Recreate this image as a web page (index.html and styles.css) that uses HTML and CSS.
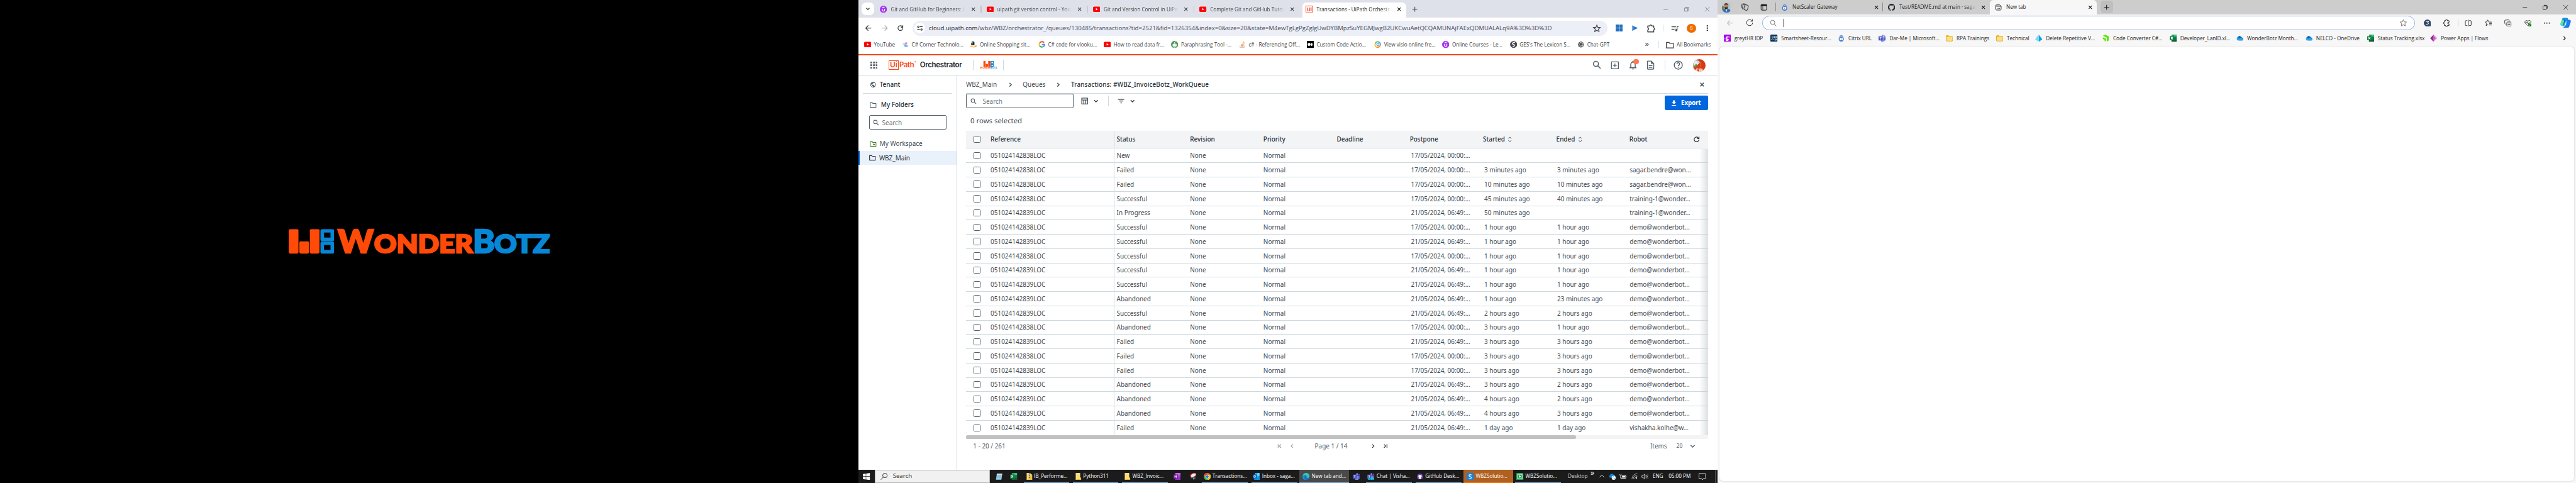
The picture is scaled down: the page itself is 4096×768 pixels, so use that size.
FILE: index.html
```html
<!DOCTYPE html>
<html lang="en">
<head>
<meta charset="utf-8">
<title>Transactions - UiPath Orchestrator</title>
<link rel="stylesheet" href="styles.css">
</head>
<body>
<svg class="sprite" aria-hidden="true">
  <symbol id="yt" viewBox="0 0 16 16"><rect y="2" width="16" height="12" rx="2.5" fill="#f00"/><path d="M6.5 5.4v5.2L10.8 8z" fill="#fff"/></symbol>
  <symbol id="udemy" viewBox="0 0 16 16"><circle cx="8" cy="8" r="8" fill="#a435f0"/><path d="M5.3 7v2.4a2.7 2.7 0 0 0 5.4 0V7M5.5 5 8 3.2 10.5 5" fill="none" stroke="#fff" stroke-width="1.7"/></symbol>
  <symbol id="x" viewBox="0 0 16 16"><path d="M4.5 4.5l7 7m0-7l-7 7" fill="none" stroke="currentColor" stroke-width="1.6"/></symbol>
  <symbol id="xthin" viewBox="0 0 16 16"><path d="M3 3l10 10m0-10L3 13" fill="none" stroke="currentColor" stroke-width="1.1"/></symbol>
  <symbol id="min" viewBox="0 0 16 16"><path d="M3 8.5h10" stroke="currentColor" stroke-width="1.1"/></symbol>
  <symbol id="restore" viewBox="0 0 16 16"><path d="M3.5 5.5h7v7h-7zM5.5 5.5v-2h7v7h-2" fill="none" stroke="currentColor" stroke-width="1.1"/></symbol>
  <symbol id="restore2" viewBox="0 0 16 16"><rect x="3.5" y="5" width="7.5" height="8" rx="1.5" fill="none" stroke="currentColor" stroke-width="1.1"/><path d="M5.5 3.3H11a2 2 0 0 1 2 2v5.5" fill="none" stroke="currentColor" stroke-width="1.1"/></symbol>
  <symbol id="plus" viewBox="0 0 16 16"><path d="M8 2.5v11M2.5 8h11" stroke="currentColor" stroke-width="1.5"/></symbol>
  <symbol id="down" viewBox="0 0 16 16"><path d="M4 6l4 4 4-4" fill="none" stroke="currentColor" stroke-width="1.8"/></symbol>
  <symbol id="right" viewBox="0 0 16 16"><path d="M6 4l4 4-4 4" fill="none" stroke="currentColor" stroke-width="1.7"/></symbol>
  <symbol id="left" viewBox="0 0 16 16"><path d="M10 4L6 8l4 4" fill="none" stroke="currentColor" stroke-width="1.7"/></symbol>
  <symbol id="first" viewBox="0 0 16 16"><path d="M12 4L8 8l4 4M5 3.5v9" fill="none" stroke="currentColor" stroke-width="1.7"/></symbol>
  <symbol id="last" viewBox="0 0 16 16"><path d="M4 4l4 4-4 4M11 3.5v9" fill="none" stroke="currentColor" stroke-width="1.7"/></symbol>
  <symbol id="back" viewBox="0 0 16 16"><path d="M14.5 8H2.5M8 2.2L2.2 8 8 13.8" fill="none" stroke="currentColor" stroke-width="1.8"/></symbol>
  <symbol id="fwd" viewBox="0 0 16 16"><path d="M1.5 8h12M8 2.2L13.8 8 8 13.8" fill="none" stroke="currentColor" stroke-width="1.8"/></symbol>
  <symbol id="reload" viewBox="0 0 16 16"><path d="M13.2 8a5.3 5.3 0 1 1-1.5-3.7l1.5 1.5M13.4 1.8v4.3H9.2" fill="none" stroke="currentColor" stroke-width="1.7"/></symbol>
  <symbol id="reload2" viewBox="0 0 16 16"><path d="M14.2 8a6.3 6.3 0 1 1-1.8-4.4l1 1M13.8 1v4h-4" fill="none" stroke="currentColor" stroke-width="1.2"/></symbol>
  <symbol id="tune" viewBox="0 0 16 16"><circle cx="4.5" cy="4.8" r="1.7" fill="none" stroke="currentColor" stroke-width="1.6"/><circle cx="11.5" cy="11.2" r="1.7" fill="none" stroke="currentColor" stroke-width="1.6"/><path d="M8 4.8h6M2 11.2h6" stroke="currentColor" stroke-width="1.8"/></symbol>
  <symbol id="star" viewBox="0 0 24 24"><path d="M12 3.2l2.6 6 6.5.6-4.9 4.3 1.5 6.4-5.7-3.4-5.7 3.4 1.5-6.4-4.9-4.3 6.5-.6z" fill="none" stroke="currentColor" stroke-width="2"/></symbol>
  <symbol id="starthin" viewBox="0 0 24 24"><path d="M12 2.5l2.9 6.3 6.7.8-5 4.6 1.4 6.8-6-3.4L6 21l1.4-6.8-5-4.6 6.7-.8z" fill="none" stroke="currentColor" stroke-width="1.5"/></symbol>
  <symbol id="puzzle" viewBox="0 0 24 24"><path d="M3.5 5.5H9a2.6 2.6 0 0 1 5.2 0h5.3v5.2a2.7 2.7 0 0 1 0 5.3v5.5h-16v-5.2a3 3 0 0 0 0-5.8z" fill="none" stroke="currentColor" stroke-width="2.4" stroke-linejoin="round"/></symbol>
  <symbol id="puzzle2" viewBox="0 0 24 24"><path d="M5 5.5h4a2.6 2.6 0 1 1 5 0h5v5h-2a2.2 2.2 0 1 0 0 4.4h2v5h-5a2.6 2.6 0 1 1-5 0H5v-5.2a2.4 2.4 0 1 1 0-4.6z" fill="none" stroke="currentColor" stroke-width="1.7" stroke-linejoin="round"/></symbol>
  <symbol id="music" viewBox="0 0 24 24"><path d="M15 6H3v2h12V6zm0 4H3v2h12v-2zM3 16h8v-2H3v2zM17 6v8.2c-.3-.1-.7-.2-1-.2a3 3 0 1 0 3 3V8h3V6h-5z" fill="currentColor"/></symbol>
  <symbol id="dotsv" viewBox="0 0 16 16"><circle cx="8" cy="3" r="1.5"/><circle cx="8" cy="8" r="1.5"/><circle cx="8" cy="13" r="1.5"/></symbol>
  <symbol id="dotsh" viewBox="0 0 16 16"><circle cx="2.5" cy="8" r="1.3"/><circle cx="8" cy="8" r="1.3"/><circle cx="13.5" cy="8" r="1.3"/></symbol>
  <symbol id="win" viewBox="0 0 16 16"><path d="M0 2.3L6.6 1.4V7.5H0zM7.4 1.3L16 0v7.5H7.4zM0 8.4h6.6v6.2L0 13.7zM7.4 8.4H16V16l-8.6-1.3z" fill="currentColor"/></symbol>
  <symbol id="bluegrid" viewBox="0 0 16 16"><path d="M0 0h7.5v7.5H0zM8.500 0H16v7.5H8.5zM0 8.5h7.5V16H0zM8.5 8.5H16V16H8.5z" fill="#1f6fbe"/></symbol>
  <symbol id="bluearrow" viewBox="0 0 16 16"><path d="M1.500 2L14.5 7.6 1.500 14z" fill="#2a6fc0"/><path d="M1.500 2l4 5.800-4 6.200z" fill="#75aee8"/></symbol>
  <symbol id="csharp" viewBox="0 0 16 16"><path d="M4 9c1-2 4-3 6-1 3 0 4 2 3 6H7c-1-2-2-3-3-5z" fill="#7db9ec"/><path d="M1 8l4-5 3 5z" fill="#b9d4ea"/><path d="M9 2l1.2 1.7L12 3.5l-.8 1.7.9 1.5-1.9-.3L9 8l-.5-1.8-1.9-.5 1.600-1z" fill="#e0455a"/></symbol>
  <symbol id="amazon" viewBox="0 0 16 16"><text x="2.5" y="10.5" font-family="Open Sans" font-weight="800" font-size="14" fill="#111">a</text><path d="M1 11c3.500 3.300 9 3.500 12.500 1.200M12 11l2.500.3-.7 2.300" fill="none" stroke="#f90" stroke-width="1.6"/></symbol>
  <symbol id="google" viewBox="0 0 16 16"><path d="M12.700 4A5.800 5.800 0 0 0 3 5" fill="none" stroke="#ea4335" stroke-width="2.6"/><path d="M3 5a5.800 5.800 0 0 0 0 6" fill="none" stroke="#fbbc05" stroke-width="2.6"/><path d="M3 11a5.800 5.800 0 0 0 9 1.200" fill="none" stroke="#34a853" stroke-width="2.6"/><path d="M8 8h5.800c0 2-.7 3.300-1.900 4.300" fill="none" stroke="#4285f4" stroke-width="2.6"/></symbol>
  <symbol id="quill" viewBox="0 0 16 16"><circle cx="8" cy="8" r="8" fill="#499557"/><rect x="3.500" y="6.500" width="9" height="6" rx="1.800" fill="#fff"/><path d="M8 6.500V3l2.500-1" stroke="#fff" stroke-width="1.300" fill="none"/><circle cx="6" cy="9" r=".9" fill="#499557"/><circle cx="10" cy="9" r=".9" fill="#499557"/><path d="M6 14.500h4" stroke="#fff"/></symbol>
  <symbol id="so" viewBox="0 0 16 16"><path d="M2.500 10v5h9v-5" fill="none" stroke="#bcbbbb" stroke-width="1.300"/><path d="M4.300 12.700h5.500M4.500 10l5.400 1M5.300 7.200l5 2.300M7 4.200l4.300 3.500M9.800 1.500l3 4.500" stroke="#f48024" stroke-width="1.300"/></symbol>
  <symbol id="medium" viewBox="0 0 16 16"><rect width="16" height="16" fill="#000"/><circle cx="4.800" cy="8" r="3.300" fill="#fff"/><ellipse cx="10.300" cy="8" rx="1.700" ry="3.100" fill="#fff"/><path d="M13.500 5.300v5.400" stroke="#fff"/></symbol>
  <symbol id="swirl" viewBox="0 0 16 16"><path d="M8 2a6 6 0 0 1 5.800 7" fill="none" stroke="#2ea3d8" stroke-width="2.600"/><path d="M13.800 9A6 6 0 0 1 5 13.500" fill="none" stroke="#f58220" stroke-width="2.600"/><path d="M5 13.500A6 6 0 0 1 2.500 6" fill="none" stroke="#fbc02d" stroke-width="2.600"/><path d="M2.500 6A6 6 0 0 1 8 2" fill="none" stroke="#6cb33f" stroke-width="2.600"/><circle cx="8.300" cy="8" r="2.600" fill="none" stroke="#3f8fd0" stroke-width="1.500"/></symbol>
  <symbol id="ges" viewBox="0 0 16 16"><circle cx="8" cy="8" r="7.800" fill="#474a50"/><path d="M11 3.500C7 3 4.500 5 6 7c1 1.300 4 .8 4 3 0 1.500-2 2.500-4 3" fill="none" stroke="#fff" stroke-width="2"/></symbol>
  <symbol id="gpt" viewBox="0 0 16 16"><g fill="none" stroke="#444" stroke-width="1.200"><circle cx="8" cy="8" r="2"/><ellipse cx="8" cy="4.800" rx="3.200" ry="2.900"/><ellipse cx="10.800" cy="6.600" rx="3.200" ry="2.900"/><ellipse cx="10.800" cy="9.800" rx="3.200" ry="2.900"/><ellipse cx="8" cy="11.300" rx="3.200" ry="2.900"/><ellipse cx="5.200" cy="9.800" rx="3.200" ry="2.900"/><ellipse cx="5.200" cy="6.600" rx="3.200" ry="2.900"/></g></symbol>
  <symbol id="folder" viewBox="0 0 16 16"><path d="M1 3h5l1.500 1.800H15V14H1z" fill="none" stroke="currentColor" stroke-width="1.700" stroke-linejoin="round"/></symbol>
  <symbol id="folderstar" viewBox="0 0 16 16"><path d="M1 3h5l1.500 1.800H15V14H1z" fill="none" stroke="currentColor" stroke-width="1.700" stroke-linejoin="round"/><path d="M10 6.500l.9 1.900 2 .2-1.500 1.400.4 2-1.800-1-1.800 1 .4-2L7.100 8.600l2-.2z" fill="currentColor"/></symbol>
  <symbol id="globe" viewBox="0 0 24 24"><path d="M12 2a10 10 0 1 0 0 20 10 10 0 0 0 0-20zm-1 17.930C7.050 19.440 4 16.080 4 12c0-.62.080-1.210.210-1.790L9 15v1c0 1.100.9 2 2 2v1.930zm6.900-2.540c-.26-.81-1-1.390-1.900-1.390h-1v-3c0-.55-.45-1-1-1H8v-2h2c.55 0 1-.45 1-1V7h2c1.100 0 2-.9 2-2v-.41c2.930 1.190 5 4.060 5 7.410 0 2.080-.8 3.970-2.100 5.390z" fill="currentColor"/></symbol>
  <symbol id="search" viewBox="0 0 16 16"><circle cx="6.300" cy="6.300" r="4.500" fill="none" stroke="currentColor" stroke-width="1.700"/><path d="M9.600 9.600l5 5" stroke="currentColor" stroke-width="1.900"/></symbol>
  <symbol id="searchthin" viewBox="0 0 16 16"><circle cx="6.500" cy="6.500" r="4.700" fill="none" stroke="currentColor" stroke-width="1.100"/><path d="M10 10l4.500 4.500" stroke="currentColor" stroke-width="1.200"/></symbol>
  <symbol id="searchwin" viewBox="0 0 16 16"><circle cx="10" cy="5.800" r="5" fill="none" stroke="currentColor" stroke-width="1.300"/><path d="M6.400 9.400L.8 15.200" stroke="currentColor" stroke-width="1.300"/></symbol>
  <symbol id="waffle" viewBox="0 0 16 16"><path d="M0 0h4v4H0zM6 0h4v4H6zM12 0h4v4h-4zM0 6h4v4H0zM6 6h4v4H6zM12 6h4v4h-4zM0 12h4v4H0zM6 12h4v4H6zM12 12h4v4h-4z" fill="currentColor"/></symbol>
  <symbol id="addbox" viewBox="0 0 24 24"><path d="M3.500 3.500h17v17h-17zM12 7.500v9M7.500 12h9" fill="none" stroke="currentColor" stroke-width="2" stroke-linejoin="round"/></symbol>
  <symbol id="bell" viewBox="0 0 24 24"><path d="M12 22c1.100 0 2-.9 2-2h-4a2 2 0 0 0 2 2zm6-6v-5c0-3.070-1.630-5.640-4.500-6.320V4a1.500 1.500 0 0 0-3 0v.68C7.640 5.360 6 7.920 6 11v5l-2 2v1h16v-1l-2-2zm-2 1H8v-6c0-2.480 1.510-4.500 4-4.500s4 2.020 4 4.500v6z" fill="currentColor"/></symbol>
  <symbol id="doc" viewBox="0 0 24 24"><path d="M8 16h8v2H8zm0-4h8v2H8zm6-10H6c-1.100 0-2 .9-2 2v16c0 1.100.890 2 1.990 2H18c1.100 0 2-.9 2-2V8l-6-6zm4 18H6V4h7v5h5v11z" fill="currentColor"/></symbol>
  <symbol id="help" viewBox="0 0 24 24"><circle cx="12" cy="12" r="9" fill="none" stroke="currentColor" stroke-width="2"/><path d="M9 9.500a3 3 0 1 1 4.500 2.600c-1 .6-1.500 1-1.500 2.200M12 16v2" fill="none" stroke="currentColor" stroke-width="2"/></symbol>
  <symbol id="tableicon" viewBox="0 0 16 16"><path d="M1.500 1.500h13v13h-13zM1.500 5.500h13M6 5.500v9M10.300 5.500v9" fill="none" stroke="currentColor" stroke-width="1.500"/></symbol>
  <symbol id="filter" viewBox="0 0 16 16"><path d="M1 4h14M3.800 8h8.400M6.600 12h2.800" stroke="currentColor" stroke-width="1.800"/></symbol>
  <symbol id="download" viewBox="0 0 16 16"><path d="M6 2h4v4h3L8 11 3 6h3zM3 12.500h10V14H3z" fill="currentColor"/></symbol>
  <symbol id="sort" viewBox="0 0 16 16"><path d="M4.700 6L8 2.700 11.300 6M4.700 10L8 13.300 11.300 10" fill="none" stroke="currentColor" stroke-width="1.300"/></symbol>
  <symbol id="wbz" viewBox="0 0 102 56"><g fill="#ff4a08"><rect width="21.800" height="55" rx="3"/><rect x="23.800" y="27.600" width="21.700" height="27.400" rx="3"/><rect x="47.300" width="21.700" height="55" rx="3"/></g><g fill="none" stroke="#0787d6" stroke-width="8" stroke-linejoin="round"><rect x="75" y="4" width="22.500" height="19.200"/><rect x="75" y="31.800" width="22.500" height="19.200"/></g></symbol>
  <symbol id="lock" viewBox="0 0 16 16"><circle cx="8" cy="10" r="5.800" fill="#4a78c2"/><path d="M4.800 8V5a3.200 3.200 0 0 1 6.400 0v3" fill="none" stroke="#6d9adb" stroke-width="1.800"/><rect x="4.500" y="7.500" width="7" height="5" rx=".6" fill="#fff"/><path d="M8 9v2" stroke="#4a78c2" stroke-width="1.500"/></symbol>
  <symbol id="github" viewBox="0 0 16 16"><path fill="currentColor" d="M8 0C3.580 0 0 3.580 0 8c0 3.540 2.290 6.530 5.470 7.590.4.070.55-.17.55-.38 0-.19-.010-.82-.010-1.490-2.010.37-2.530-.49-2.690-.94-.09-.23-.48-.94-.82-1.130-.28-.15-.68-.52-.010-.53.63-.010 1.080.58 1.230.82.72 1.210 1.870.87 2.330.66.070-.52.280-.87.510-1.070-1.780-.2-3.640-.89-3.640-3.950 0-.87.310-1.590.820-2.150-.080-.2-.36-1.020.080-2.120 0 0 .670-.210 2.200.820.640-.180 1.320-.270 2-.270s1.360.090 2 .270c1.530-1.040 2.200-.820 2.200-.820.440 1.100.160 1.920.080 2.120.510.560.820 1.270.820 2.150 0 3.070-1.870 3.750-3.650 3.950.290.250.540.730.540 1.480 0 1.070-.010 1.930-.010 2.200 0 .210.150.460.550.380A8.010 8.010 0 0 0 16 8c0-4.420-3.580-8-8-8z"/></symbol>
  <symbol id="newtab" viewBox="0 0 16 16"><path d="M2 4.500a2 2 0 0 1 2-2h6.500L14 5.500V12a2 2 0 0 1-2 2H4a2 2 0 0 1-2-2zM2.500 5.500h11" fill="none" stroke="currentColor" stroke-width="1.300"/><path d="M4.800 10.200h1.400m1.200 0h1.400m1.100 0h1.400" stroke="currentColor" stroke-width="1.600"/></symbol>
  <symbol id="workspaces" viewBox="0 0 18 18"><g fill="none" stroke="currentColor" stroke-width="1.200"><rect x="7.500" y="4" width="8.500" height="11.500" rx="2" transform="rotate(12 11 10)"/><path d="M4 13.500a2 2 0 0 1-.5-2l1-6.500a2.500 2.500 0 0 1 2.500-2h5M1.800 11a2 2 0 0 1-.5-2l.8-5A2.500 2.500 0 0 1 4.500 1.500H9"/></g></symbol>
  <symbol id="vtabs" viewBox="0 0 16 16"><rect x="1.700" y="1.700" width="12.600" height="12.600" rx="2" fill="none" stroke="currentColor" stroke-width="1.400"/><path d="M1.700 2h12.600v2.700H1.700zM5.500 4v10" fill="currentColor" stroke="currentColor"/></symbol>
  <symbol id="greyt" viewBox="0 0 16 16"><rect width="16" height="16" fill="#a800e8"/><text x="4.200" y="11" font-family="Open Sans" font-weight="800" font-size="11" fill="#fff">g</text><circle cx="2.500" cy="9.500" r="1" fill="#fff"/><circle cx="13" cy="5.500" r="1" fill="#fff"/></symbol>
  <symbol id="smart" viewBox="0 0 16 16"><rect width="16" height="16" rx="2" fill="#06315b"/><g fill="none" stroke="#fff" stroke-width="1.100"><circle cx="5" cy="5.500" r="1.600"/><path d="M2 12c.3-3 5.500-3 6 0M9 4h4.500v3H9zM9.500 10h4v2.500h-4"/></g></symbol>
  <symbol id="teams" viewBox="0 0 16 16"><circle cx="9.500" cy="2.800" r="2.300" fill="#7b83eb"/><circle cx="14" cy="3.500" r="1.500" fill="#5059c9"/><path d="M12 6h4v5a2.500 2.500 0 0 1-4 2z" fill="#5059c9"/><path d="M5 6h8v6a4 4 0 0 1-8 1z" fill="#7b83eb"/><rect y="4" width="9" height="9" rx=".8" fill="#4b53bc"/><path d="M2.500 6.500h4M4.500 6.500V11" stroke="#fff" stroke-width="1.200"/></symbol>
  <symbol id="teamsnew" viewBox="0 0 16 16"><use href="#teams"/><rect x="2" y="11" width="13.500" height="5" rx="2" fill="#18e3ef"/><path d="M4 15v-3l2 3v-3M7.700 12v3h1.700M7.700 13.500h1.500M10.500 12l1 3 1-2 1 2 .8-3" fill="none" stroke="#123" stroke-width=".7"/></symbol>
  <symbol id="yfolder" viewBox="0 0 16 16"><path d="M.7 4a2 2 0 0 1 2-2h3l1.800 2h6a2 2 0 0 1 1.900 2v6.500a2 2 0 0 1-2 2H2.700a2 2 0 0 1-2-2z" fill="#ffe07a" stroke="#c79a1b" stroke-width="1.100"/><path d="M1.200 5.800h4.500L7.500 4 5.500 2.400h-3Q1.200 2.500 1.200 4z" fill="#f3bd2e"/></symbol>
  <symbol id="diamond" viewBox="0 0 16 16"><path d="M8 0l8 10.500L8 16z" fill="#00a4e4"/><path d="M8 0L0 10.500 8 16z" fill="#7ad5f7"/></symbol>
  <symbol id="green" viewBox="0 0 16 16"><path d="M1 2.500l5-2 8 3.500v9.500l-4 2V7z M1 6l7 3v5l-3 1.500V12L1 10z" fill="#5ce500"/></symbol>
  <symbol id="excel" viewBox="0 0 16 16"><path d="M4 0h12v16H4z" fill="#21a366"/><path d="M10 0h6v5h-6z" fill="#33c481"/><path d="M10 5h6v5.500h-6z" fill="#107c41"/><path d="M4 10.500h12V16H4z" fill="#185c37"/><rect y="3.500" width="9.500" height="9" rx=".6" fill="#107c41"/><path d="M2.800 5.500l4 5m0-5l-4 5" stroke="#fff" stroke-width="1.500"/></symbol>
  <symbol id="cloud" viewBox="0 0 16 16"><path d="M4.500 13A4 4 0 0 1 3 5.600 5 5 0 0 1 11.600 6a3.600 3.600 0 0 1 .9 7z" fill="#0f6cbd"/><path d="M3 13a3 3 0 0 1-.5-5.500L9 6.500l6 3.500a2 2 0 0 1-1.500 3.200z" fill="#28a8ea"/><path d="M2.700 6A5 5 0 0 1 11.500 6L7 9z" fill="#0364b8"/></symbol>
  <symbol id="papps" viewBox="0 0 16 16"><path d="M8 0l8 8-8 8z" fill="#e8a0dc"/><path d="M8 0v16L0 8z" fill="#92278f"/><path d="M8 3l5 5-5 5-2-5z" fill="#c860bd"/></symbol>
  <symbol id="three" viewBox="0 0 16 16"><path d="M8 0a8 8 0 1 0 3.500 15.200H16V8A8 8 0 0 0 8 0z" fill="#34496a"/><path d="M5 4.500h5.500L8.500 7.500c3 0 2.500 4-3.500 3.600" fill="none" stroke="#fff" stroke-width="1.500"/></symbol>
  <symbol id="split" viewBox="0 0 16 16"><path d="M6 2.500H3A1.500 1.500 0 0 0 1.500 4v8A1.500 1.500 0 0 0 3 13.500h3M10 2.500h3A1.500 1.500 0 0 1 14.500 4v8a1.500 1.500 0 0 1-1.500 1.500h-3M8 .5v15" fill="none" stroke="currentColor" stroke-width="1.200"/></symbol>
  <symbol id="favs" viewBox="0 0 16 16"><path d="M9 5.500L6.500 1 4.700 5.200.7 5.800l3 3-.8 5 4-2.200M9 5.800h6.500M10 9h5.500M9 12.200h6.500" fill="none" stroke="currentColor" stroke-width="1.200"/></symbol>
  <symbol id="coll" viewBox="0 0 16 16"><rect x="5.500" y="5.500" width="9.800" height="9.800" rx="2" fill="none" stroke="currentColor" stroke-width="1.200"/><path d="M10.400 7.800v5.400M7.700 10.500h5.400M3.500 11.500L1.300 9 .8 3.500A2 2 0 0 1 2.500 1.300L9 .8a2 2 0 0 1 2 1.700l.2 1" fill="none" stroke="currentColor" stroke-width="1.200"/></symbol>
  <symbol id="heart" viewBox="0 0 16 16"><path d="M7.500 14L2 8.500C-1 5 3 0 7.700 3.500 12 0 16.500 4.500 14 8M1 7.500h3.500L6 5l2.500 5L10 7.500h4" fill="none" stroke="currentColor" stroke-width="1.100"/><circle cx="12" cy="12.300" r="3.600" fill="#107c10"/><path d="M10.300 12.500l1.200 1 2-2.400" fill="none" stroke="#fff"/></symbol>
  <symbol id="copilot" viewBox="0 0 24 24"><path d="M6 1h9l-5 17H4C0 18 0 15 1 12L4 3c.5-1.500 1-2 2-2z" fill="#1bb6c9"/><path d="M1 12L3 6l6 0-3 9c-1 3-5 3-5-3z" fill="#5fe3a1"/><path d="M14 5h6c4 0 4 3 3 6l-3 9c-.7 2-2 3-4 3H8l2-5c2 0 2.500-1 3-3z" fill="#1e7bf0"/><path d="M6 1h9c2 0 2 2 3 5h-5c-2 0-2.500 1-3 3L7 18l-1 2 2 3c-3 0-3-2-2-5L9 7z" fill="#0f4fc0"/><path d="M6 1h8c2 0 3 2 3.500 5H13L9 5z" fill="#1593d8"/></symbol>
  <symbol id="notepad" viewBox="0 0 16 16"><path d="M3 1.500h12L13 15H1z" fill="#9ed3ea"/><path d="M3 1.500h12l-.5 2.500H2.600z" fill="#d9e9ef"/><path d="M4 6h9M3.700 8.500h9M3.300 11h9" stroke="#5c98b8" stroke-width=".8"/></symbol>
  <symbol id="zip" viewBox="0 0 16 16"><path d="M2 0h8l1.500 3H14v13H2z" fill="#f7d774"/><path d="M12 4h2.500v12H4z" fill="#e9bd45"/><path d="M8 0v12" stroke="#555" stroke-width="2.500" stroke-dasharray="1.200 .8"/></symbol>
  <symbol id="tfolder" viewBox="0 0 16 16"><path d="M2 0h10v10.500h2V16H2z" fill="#fbdc7b"/><path d="M12 10.500h2.200V16H2l2-2h8z" fill="#e5b43c"/></symbol>
  <symbol id="onenote" viewBox="0 0 16 16"><path d="M4 0h12v16H4z" fill="#ae4bd5"/><path d="M4 0h12v4H4z" fill="#ca64ea"/><path d="M12 8h4v8H4v-4z" fill="#9332bf"/><rect y="3.500" width="9.500" height="9" fill="#7719aa"/><path d="M3 10.500V5.600l3.500 4.800V5.500" fill="none" stroke="#fff" stroke-width="1.300"/></symbol>
  <symbol id="snip" viewBox="0 0 16 16"><ellipse cx="9" cy="5" rx="6.500" ry="4" transform="rotate(-25 9 5)" fill="#eee" stroke="#c33" stroke-width="1.500"/><path d="M2 9l8 1-5 2z" fill="#d84a4a"/><path d="M10 8v7M8 12l6-1" stroke="#4aa0d8" stroke-width="1.700"/></symbol>
  <symbol id="chrome" viewBox="0 0 16 16"><circle cx="8" cy="8" r="8" fill="#fbc116"/><path d="M1.070 4A8 8 0 0 1 14.930 4H8a4 4 0 0 0-3.460 6z" fill="#ea4335"/><path d="M1.070 4A8 8 0 0 0 8 16l3.460-6A4 4 0 0 1 4.540 10z" fill="#34a853"/><circle cx="8" cy="8" r="4" fill="#fff"/><circle cx="8" cy="8" r="3.100" fill="#1a73e8"/></symbol>
  <symbol id="outlook" viewBox="0 0 16 16"><path d="M5 0h10v14H5z" fill="#28a8ea"/><path d="M10 0h5v7h-5z" fill="#50d9ff"/><path d="M3 8l7 3 6-3v8H3z" fill="#1490df"/><rect y="3.500" width="9" height="9" fill="#0a5fb8"/><ellipse cx="4.500" cy="8" rx="1.900" ry="2.300" fill="none" stroke="#fff" stroke-width="1.300"/></symbol>
  <symbol id="edge" viewBox="0 0 16 16"><circle cx="8" cy="8" r="8" fill="#1b6fc4"/><path d="M.3 7C1 2.500 4.500 0 8 0c5 0 8 3.500 8 7 0 3-2.500 4-5 4-1.500 0-2.500-.7-1.800-1.600C10.500 7.500 8.500 5 6 5 3.500 5 1 6 .3 7z" fill="#3bc9a5"/><path d="M6 5C3 5 0 7 .2 9.500 1 13.500 4 16 8 16c-3.500-1-5-5-3.500-8C5 7 6 6 6 5z" fill="#1597dd"/></symbol>
  <symbol id="ghdesk" viewBox="0 0 16 16"><circle cx="8" cy="8" r="8" fill="#6e40aa"/><path d="M4.500 5l-.3-2 2 1h3.600l2-1-.3 2c1.500 3 .5 5.500-2 5.800.4.500.5 1 .5 2V14H6v-1.500c-1.500.4-2-.5-2.500-1l1.300.1c.5.600 1.200.5 1.300-.8C3.800 10.500 3 8 4.500 5z" fill="#fff"/></symbol>
  <symbol id="studio" viewBox="0 0 16 16"><rect width="16" height="16" fill="#1182e8"/><path d="M11 4.500C7 2.500 4 5 6 7s6 2 4 5c-1 1.500-4 1-5 .2" fill="none" stroke="#fff" stroke-width="1.600"/></symbol>
  <symbol id="play" viewBox="0 0 16 16"><rect width="16" height="16" rx="1" fill="#1d9c4c"/><path d="M3 3h10v10H3z" fill="none" stroke="#fff" stroke-width="1.300"/><path d="M6 5l5 3-5 3z" fill="#fff"/></symbol>
  <symbol id="up" viewBox="0 0 16 16"><path d="M2 11l6-6 6 6" fill="none" stroke="currentColor" stroke-width="1.300"/></symbol>
  <symbol id="sync" viewBox="0 0 16 16"><path d="M3.500 11A3.500 3.500 0 0 1 3 4.500 4.500 4.500 0 0 1 11 4a3 3 0 0 1 3 4z" fill="#1683d8"/><circle cx="11" cy="11" r="4.600" fill="#fff"/><path d="M8.300 10.500A2.700 2.700 0 0 1 13 9.300M13.700 11.500A2.700 2.700 0 0 1 9 12.700" fill="none" stroke="#1683d8" stroke-width="1.200"/></symbol>
  <symbol id="battery" viewBox="0 0 16 16"><path d="M5 5h9v7H4V9.500" fill="none" stroke="#fff" stroke-width="1.200"/><path d="M6 6.700h6.500v3.700H6zM14.500 7h1.300v3h-1.300z" fill="#fff"/><path d="M1 2.500v3h3v-3M2.500 6v6" fill="none" stroke="#fff"/></symbol>
  <symbol id="wifi" viewBox="0 0 16 16"><g fill="none" stroke="#ddd" stroke-width="1.200"><path d="M1.500 15A13 13 0 0 1 15 2M5 15A10 10 0 0 1 15 5.500M8.500 15A7 7 0 0 1 15 9"/></g><circle cx="13" cy="13" r="1.800" fill="#fff"/></symbol>
  <symbol id="sound" viewBox="0 0 16 16"><path d="M1 6h2.500L7 2.500v11L3.500 10H1zM9.500 6a3 3 0 0 1 0 4M11.500 4a6 6 0 0 1 0 8" fill="none" stroke="#fff" stroke-width="1.100"/><path d="M13.500 2.300a9 9 0 0 1 0 11.400" fill="none" stroke="#777" stroke-width="1.100"/></symbol>
  <symbol id="notif" viewBox="0 0 16 16"><path d="M.7 1.500h14.600v11h-4.500L8.500 15.300 6.200 12.500H.7z" fill="none" stroke="#fff" stroke-width="1.200"/></symbol>
</svg>

<div class="desktop">
  <section class="wall">
    <svg class="wall-logo" viewBox="0 0 590 62" role="img">
      <use href="#wbz" x="0" y="3" width="102" height="56"/>
      <g class="wordmark">
        <text class="hot" x="110" y="56" font-size="73" textLength="80" lengthAdjust="spacingAndGlyphs">W</text>
        <text class="hot" x="191" y="56" font-size="57" textLength="221" lengthAdjust="spacingAndGlyphs">ONDER</text>
        <text class="cool" x="412" y="56" font-size="73" textLength="49" lengthAdjust="spacingAndGlyphs">B</text>
        <text class="cool" x="460" y="56" font-size="57" textLength="124" lengthAdjust="spacingAndGlyphs">OTZ</text>
      </g>
    </svg>
  </section>

  <section class="screen">
    <div class="ctabs">
      <span class="tabsearch"><svg class="i14"><use href="#down"/></svg></span>
      <div class="ctab"><svg><use href="#udemy"/></svg><span class="fade">Git and GitHub for Beginners: Le</span><svg><use href="#x"/></svg></div>
      <div class="ctab"><svg><use href="#yt"/></svg><span class="fade">uipath git version control - YouT</span><svg><use href="#x"/></svg></div>
      <div class="ctab"><svg><use href="#yt"/></svg><span class="fade">Git and Version Control in UiPat</span><svg><use href="#x"/></svg></div>
      <div class="ctab last"><svg><use href="#yt"/></svg><span class="fade">Complete Git and GitHub Tutori</span><svg><use href="#x"/></svg></div>
      <div class="ctab active"><svg viewBox="0 0 16 16"><rect x=".7" y=".7" width="14.600" height="14.600" fill="#fff" stroke="#fa4616" stroke-width="1.400"/><text x="2.500" y="12.300" font-family="Inter" font-weight="700" font-size="11.500" fill="#fa4616">Ui</text></svg><span class="fade">Transactions - UiPath Orchestrat</span><svg><use href="#x"/></svg></div>
      <span class="newtab"><svg><use href="#plus"/></svg></span>
      <div class="winbtns gray"><svg><use href="#min"/></svg><svg><use href="#restore"/></svg><svg><use href="#xthin"/></svg></div>
    </div>
    <div class="ctoolbar">
      <svg><use href="#back"/></svg>
      <svg class="dim"><use href="#fwd"/></svg>
      <svg><use href="#reload"/></svg>
      <div class="omnibox"><span class="site"><svg><use href="#tune"/></svg></span><span class="url"><b>cloud.uipath.com</b>/wbz/WBZ/orchestrator_/queues/130485/transactions?tid=2521&amp;fid=1326354&amp;index=0&amp;size=20&amp;state=M4ewTgLgPgZglgUwDYBMpzSuYEGMJwgB2UKCwuAetQCQAMUNAjFAExQDMUALALq9A%3D%3D%3D</span><svg class="i20"><use href="#star"/></svg></div>
      <svg><use href="#bluegrid"/></svg>
      <svg><use href="#bluearrow"/></svg>
      <svg class="i20"><use href="#puzzle"/></svg>
      <i class="vbar blue"></i>
      <svg class="i20"><use href="#music"/></svg>
      <span class="profile">S</span>
      <svg><use href="#dotsv"/></svg>
    </div>
    <div class="cmarks">
      <span class="mark"><svg><use href="#yt"/></svg>YouTube</span>
      <span class="mark"><svg><use href="#csharp"/></svg>C# Corner Technolo...</span>
      <span class="mark"><svg><use href="#amazon"/></svg>Online Shopping sit...</span>
      <span class="mark"><svg><use href="#google"/></svg>C# code for vlooku...</span>
      <span class="mark"><svg><use href="#yt"/></svg>How to read data fr...</span>
      <span class="mark"><svg><use href="#quill"/></svg>Paraphrasing Tool -...</span>
      <span class="mark"><svg><use href="#so"/></svg>c# - Referencing Off...</span>
      <span class="mark"><svg><use href="#medium"/></svg>Custom Code Actio...</span>
      <span class="mark"><svg><use href="#swirl"/></svg>View visio online fre...</span>
      <span class="mark"><svg><use href="#udemy"/></svg>Online Courses - Le...</span>
      <span class="mark"><svg><use href="#ges"/></svg>GES's The Lexicon S...</span>
      <span class="mark"><svg><use href="#gpt"/></svg>Chat-GPT</span>
      <span class="more">»</span>
      <i class="vbar blue"></i>
      <span class="mark"><svg class="i18"><use href="#folder"/></svg>All Bookmarks</span>
    </div>

    <header class="appbar">
      <svg class="waffle"><use href="#waffle"/></svg>
      <span class="uibox">Ui</span><span class="path">Path<sup>®</sup></span>
      <span class="product">Orchestrator</span>
      <i class="vbar"></i>
      <span class="tenantlogo"><svg viewBox="0 0 102 56"><use href="#wbz"/></svg><span><em>W<small>ONDER</small></em>B<small>OTZ</small></span></span>
      <i class="vbar"></i>
      <div class="appicons">
        <svg><use href="#search"/></svg>
        <svg class="i22"><use href="#addbox"/></svg>
        <span class="bell"><svg class="i24"><use href="#bell"/></svg><i class="dot"></i></span>
        <svg class="i24"><use href="#doc"/></svg>
        <i class="vbar"></i>
        <svg class="i24"><use href="#help"/></svg>
        <span class="avatar"><svg viewBox="0 0 28 28"><path d="M1 3h10l5 5v9H1z" fill="#e4eefb" stroke="#9fb4c8"/><path d="M11 3l5 5h-5z" fill="#fff" stroke="#9fb4c8"/><path d="M1 17l6-7 3 4 4-3 2 2v4z" fill="#5aa93e"/><path d="M6 17L16 7v10z" fill="#d93a12"/></svg>SB</span>
      </div>
    </header>

    <div class="workspace">
      <nav class="side">
        <div class="item strong tenant"><svg><use href="#globe"/></svg>Tenant</div>
        <div class="item strong folders"><svg><use href="#folder"/></svg>My Folders</div>
        <div class="field side-search"><svg><use href="#search"/></svg>Search</div>
        <div class="item own"><svg class="leaf"><use href="#folderstar"/></svg>My Workspace</div>
        <div class="item current"><svg><use href="#folder"/></svg>WBZ_Main</div>
      </nav>
      <main class="content">
        <div class="crumbs"><span>WBZ_Main</span><svg><use href="#right"/></svg><span class="q">Queues</span><svg><use href="#right"/></svg><strong>Transactions: #WBZ_InvoiceBotz_WorkQueue</strong><svg class="close i18"><use href="#x"/></svg></div>
        <div class="tools">
          <div class="field main-search"><svg><use href="#search"/></svg>Search</div>
          <svg class="t"><use href="#tableicon"/></svg><svg class="c"><use href="#down"/></svg>
          <i class="vbar"></i>
          <svg class="f"><use href="#filter"/></svg><svg class="c"><use href="#down"/></svg>
          <button class="export"><svg><use href="#download"/></svg>Export</button>
        </div>
        <div class="selected">0 rows selected</div>
        <div class="grid">
          <div class="row head">
            <i class="check"></i><span class="ref">Reference</span><span>Status</span><span>Revision</span><span>Priority</span><span>Deadline</span><span>Postpone</span><span>Started<svg><use href="#sort"/></svg></span><span>Ended<svg><use href="#sort"/></svg></span><span>Robot</span><svg class="refresh"><use href="#reload"/></svg>
          </div>
          <div class="rows" id="rows"></div>
          <i class="edgeshade"></i>
        </div>
        <div class="hscroll"><i></i></div>
        <div class="pager">
          <span class="range">1 - 20 / 261</span>
          <span class="nav"><svg class="off"><use href="#first"/></svg><svg class="off"><use href="#left"/></svg><span>Page 1 / 14</span><svg><use href="#right"/></svg><svg><use href="#last"/></svg></span>
          <span class="items">Items<b>20</b><svg><use href="#down"/></svg></span>
        </div>
      </main>
    </div>

    <footer class="taskbar">
      <span class="ic start"><svg><use href="#win"/></svg></span>
      <span class="wsearch"><svg><use href="#searchwin"/></svg>Search</span>
      <span class="ic"><svg><use href="#notepad"/></svg></span>
      <span class="ic"><svg><use href="#excel"/></svg></span>
      <span class="task slim"><svg><use href="#zip"/></svg>IB_Performe...</span>
      <span class="task slim"><svg><use href="#tfolder"/></svg>Python311</span>
      <span class="task slim"><svg><use href="#tfolder"/></svg>WBZ_Invoic...</span>
      <span class="ic"><svg><use href="#onenote"/></svg></span>
      <span class="ic pr"><svg><use href="#snip"/></svg></span>
      <span class="task"><svg><use href="#chrome"/></svg>Transactions...</span>
      <span class="task"><svg><use href="#outlook"/></svg>Inbox - saga...</span>
      <span class="task wide focus"><svg><use href="#edge"/></svg>New tab and...</span>
      <span class="ic pr"><svg><use href="#teams"/></svg></span>
      <span class="task"><svg><use href="#teamsnew"/></svg>Chat | Visha...</span>
      <span class="task"><svg class="i14"><use href="#ghdesk"/></svg>GitHub Desk...</span>
      <span class="task wide alert"><svg><use href="#studio"/></svg>WBZSolutio...</span>
      <span class="task"><svg><use href="#play"/></svg>WBZSolutio...</span>
      <span class="desk">Desktop</span>
      <span class="ic more2">»</span>
      <span class="ic"><svg class="i14"><use href="#up"/></svg></span>
      <span class="ic"><svg><use href="#sync"/></svg></span>
      <span class="ic"><svg><use href="#battery"/></svg></span>
      <span class="ic"><svg class="i14"><use href="#wifi"/></svg></span>
      <span class="ic"><svg><use href="#sound"/></svg></span>
      <span class="ic">ENG</span>
      <span class="ic">05:00 PM</span>
      <span class="ic"><svg><use href="#notif"/></svg></span>
      <i class="peek"></i>
    </footer>
  </section>

  <section class="edge">
    <div class="etabs">
      <span class="face"><svg viewBox="0 0 20 24"><rect width="20" height="24" fill="#b9c9c9"/><path d="M0 24c1-8 5-9 10-9s9 1 10 9z" fill="#2a6fc0"/><path d="M0 10h4v9H0z" fill="#5f7f56"/><ellipse cx="9.500" cy="9.500" rx="5" ry="6.500" fill="#b5806a"/><path d="M4 9c0-8 11-8 11 0l-1-3H5z" fill="#231b18"/><path d="M5.500 12h8c0 6-8 6-8 0z" fill="#33241f"/><path d="M8 17h4l-2 6z" fill="#e8edf2"/></svg></span>
      <svg class="i18"><use href="#workspaces"/></svg>
      <svg><use href="#vtabs"/></svg>
      <i class="vbar dark"></i>
      <div class="etab t1"><svg><use href="#lock"/></svg><span>NetScaler Gateway</span><svg><use href="#x"/></svg></div>
      <i class="vbar dark"></i>
      <div class="etab t2"><svg class="ink"><use href="#github"/></svg><span class="fade">Test/README.md at main · sagarb</span><svg><use href="#x"/></svg></div>
      <div class="etab on"><svg><use href="#newtab"/></svg><span>New tab</span><svg><use href="#x"/></svg></div>
      <span class="enew"><svg><use href="#plus"/></svg></span>
      <div class="winbtns"><svg><use href="#min"/></svg><svg><use href="#restore2"/></svg><svg><use href="#xthin"/></svg></div>
    </div>
    <div class="etoolbar">
      <svg class="dim"><use href="#back"/></svg>
      <svg class="i17"><use href="#reload2"/></svg>
      <div class="ebox"><svg><use href="#searchthin"/></svg><i class="caret"></i><svg class="i18 st"><use href="#starthin"/></svg></div>
      <svg><use href="#three"/></svg>
      <svg class="i18"><use href="#puzzle2"/></svg>
      <i class="vbar soft"></i>
      <svg><use href="#split"/></svg>
      <svg><use href="#favs"/></svg>
      <svg><use href="#coll"/></svg>
      <svg><use href="#heart"/></svg>
      <svg><use href="#dotsh"/></svg>
      <svg class="i24"><use href="#copilot"/></svg>
    </div>
    <div class="emarks">
      <span class="mark"><svg><use href="#greyt"/></svg>greytHR IDP</span>
      <span class="mark"><svg><use href="#smart"/></svg>Smartsheet-Resour...</span>
      <span class="mark"><svg><use href="#lock"/></svg>Citrix URL</span>
      <span class="mark"><svg><use href="#teams"/></svg>Dar-Me | Microsoft...</span>
      <span class="mark"><svg><use href="#yfolder"/></svg>RPA Trainings</span>
      <span class="mark"><svg><use href="#yfolder"/></svg>Technical</span>
      <span class="mark"><svg><use href="#diamond"/></svg>Delete Repetitive V...</span>
      <span class="mark"><svg><use href="#green"/></svg>Code Converter C#...</span>
      <span class="mark"><svg><use href="#excel"/></svg>Developer_LanID.xl...</span>
      <span class="mark"><svg><use href="#cloud"/></svg>WonderBotz Month...</span>
      <span class="mark"><svg><use href="#cloud"/></svg>NELCO - OneDrive</span>
      <span class="mark"><svg><use href="#excel"/></svg>Status Tracking.xlsx</span>
      <span class="mark"><svg><use href="#papps"/></svg>Power Apps | Flows</span>
      <svg class="over"><use href="#right"/></svg>
    </div>
    <div class="blank"></div>
  </section>
</div>
<script src="rows.js"></script>
</body>
</html>
```
FILE: styles.css
```css
* { box-sizing: border-box; }
body { margin: 0; overflow: hidden; background: #000; }
svg { display: block; width: 16px; height: 16px; flex: none; }
.sprite { display: none; }
.i14 { width: 14px; height: 14px; }
.i17 { width: 17px; height: 17px; }
.i18 { width: 18px; height: 18px; }
.i20 { width: 20px; height: 20px; }
.i22 { width: 22px; height: 22px; }
.i24 { width: 24px; height: 24px; }

.desktop {
  zoom: 0.711111;
  width: 5760px; height: 1080px;
  display: grid; grid-template-columns: 1920px 1920px 1920px;
  font-family: "Open Sans", sans-serif; font-size: 11.5px; line-height: 1.3;
  white-space: nowrap;
}
.vbar { display: block; width: 1px; height: 24px; background: #cfd8dd; }
.vbar.blue { width: 2px; height: 16px; background: #cfe0f8; }
.vbar.dark { height: 20px; background: #8e8e8e; }
.vbar.soft { height: 16px; background: #cfcfcf; }
.fade { overflow: hidden; -webkit-mask-image: linear-gradient(90deg, #000 88%, transparent); mask-image: linear-gradient(90deg, #000 88%, transparent); }

/* wallpaper */
.wall { background: #000; padding: 509px 0 0 646px; }
.wall-logo { width: 590px; height: 62px; overflow: visible; }
.wordmark { font-family: Lato, sans-serif; font-weight: 900; stroke-width: 3.5px; }
.hot { fill: #ff4a08; stroke: #ff4a08; }
.cool { fill: #0787d6; stroke: #0787d6; }

/* middle screen */
.screen { display: grid; grid-template-rows: 40px 46px 35px 48px 881px 30px; background: #fff; height: 1080px; color: #3c4043; overflow: hidden; }
.ctabs { display: flex; align-items: flex-end; background: #dee1e9; padding-left: 6px; color: #444746; }
.tabsearch { width: 28px; height: 28px; margin: 0 6px 6px 0; border-radius: 10px; background: #fff; display: grid; place-items: center; color: #1f1f1f; }
.ctab { width: 238px; height: 34px; display: flex; align-items: center; padding: 0 14px 6px 8px; position: relative; }
.ctab::after { content: ""; position: absolute; right: 3px; top: 6px; width: 2px; height: 16px; background: #c3c3c8; }
.ctab.last::after, .ctab.active::after { display: none; }
.ctab .fade { flex: 1; margin: 2px 10px 0 8px; }
.ctab.active { width: 232px; padding-right: 8px; background: #fff; border-radius: 9px 9px 0 0; color: #1f1f1f; }
.newtab { margin: 0 auto 12px 12px; }
.winbtns { display: grid; grid-template-columns: 46px 46px 46px; justify-items: center; align-items: center; height: 100%; color: #000; }
.winbtns.gray { color: #777b82; }
.ctoolbar { display: grid; grid-template-columns: 36px 36px 36px 1fr 36px 35px 38px 16px 37px 36px 35px; padding: 0 5px 0 4px; align-items: center; justify-items: center; color: #3c4043; background: #fff; }
.dim { color: #b0b1b4; }
.omnibox { justify-self: stretch; height: 34px; margin: 0 8px; border-radius: 17px; background: #eceef8; display: flex; align-items: center; padding: 0 14px 0 5px; }
.site { width: 24px; height: 24px; border-radius: 50%; background: #fff; display: grid; place-items: center; color: #333; }
.url { font-size: 13.48px; margin-left: 8px; flex: 1; color: #4a4d52; }
.url b { font-weight: 400; color: #1f1f1f; }
.profile { width: 20px; height: 20px; border-radius: 50%; background: #ee6c00; color: #fff; display: grid; place-items: center; font-size: 11px; font-family: Roboto, sans-serif; }
.cmarks { display: grid; grid-template-columns: 84.5px 152.5px 152.5px 146.5px 151px 151px 152px 151px 152px 151px 151px 1fr 15px 32px 115px; padding: 0 0 7px 12px; align-items: center; }
.mark { display: flex; align-items: center; gap: 6px; }
.cmarks .vbar { justify-self: center; }
.more { font-size: 18px; line-height: 16px; margin-top: -3px; }

/* orchestrator header */
.appbar { border-top: 3px solid #fa4616; border-bottom: 1px solid #cfd8dd; display: flex; align-items: center; padding-left: 26px; color: #526069; }
.waffle { margin-right: 25px; }
.uibox { border: 2px solid #fa4616; height: 22px; width: 22px; font: 600 17px/18px Inter, sans-serif; letter-spacing: -.5px; color: #fa4616; text-align: center; }
.path { font: 600 16px/20px Inter, sans-serif; color: #fa4616; width: 36px; margin: 0 10px 0 2px; letter-spacing: -.5px; position: relative; }
.path sup { position: absolute; font-size: 5px; line-height: 5px; top: 2px; right: -1px; }
.product { font: 600 16px/20px Inter, sans-serif; color: #182027; width: 119px; letter-spacing: -.35px; }
.tenantlogo { width: 66px; display: grid; justify-items: center; }
.tenantlogo svg { width: 25px; height: 13px; }
.tenantlogo > span { font: 900 6px/5px Lato, sans-serif; color: #0787d6; }
.tenantlogo em { font-style: normal; color: #ff4a08; }
.tenantlogo small { font-size: 5px; }
.appicons { margin-left: auto; display: grid; grid-template-columns: 40px 40px 40px 40px 25px 32px 64px; justify-items: center; align-items: center; padding-right: 8px; }
.appicons > svg:first-child { width: 20px; height: 20px; }
.bell { position: relative; }
.dot { position: absolute; width: 12px; height: 12px; border-radius: 50%; background: #ff7652; left: 13px; top: -2px; }
.avatar { width: 28px; height: 28px; border-radius: 50%; overflow: hidden; background: #d93a12; position: relative; color: #fff; font: 600 14px/20px "Noto Sans", sans-serif; padding: 17px 0 0 5px; }
.avatar svg { position: absolute; left: 0; top: 0; width: 28px; height: 28px; }

/* orchestrator body */
.workspace { display: grid; grid-template-columns: 220px 1680px; font-family: "Noto Sans", sans-serif; font-size: 14px; line-height: 20px; color: #3f4a52; }
.side { border-right: 1px solid #cfd8dd; }
.item { display: flex; align-items: center; padding-left: 25px; gap: 7px; height: 32px; }
.item svg { width: 15px; height: 16px; color: #526069; }
.item.strong { font-weight: 500; color: #273139; }
.tenant { height: 41px; margin: 0 10px; padding-left: 15px; border-bottom: 1px solid #cfd8dd; }
.folders { height: 48px; gap: 10px; }
.item .leaf { color: #3c7d22; }
.item.own { margin-top: 15px; }
.item.current { background: #e9f1fa; border-left: 4px solid #0067df; padding-left: 21px; color: #273139; }
.item.current svg { color: #273139; }
.field { border: 1px solid #526069; border-radius: 3px; height: 32px; display: flex; align-items: center; color: #6b7882; background: #fff; }
.field svg { color: #526069; width: 14px; height: 14px; }
.side-search { width: 172px; margin-left: 24px; padding-left: 7px; gap: 6px; }
.content { padding-left: 20px; width: 1680px; }
.crumbs { height: 41px; border-bottom: 1px solid #cfd8dd; display: flex; align-items: center; }
.crumbs > span { width: 91px; }
.crumbs > .q { width: 72px; margin-left: 20px; }
.crumbs > strong { margin-left: 20px; font-weight: 500; color: #273139; letter-spacing: .18px; }
.crumbs svg { color: #273139; }
.close { margin: 0 5px 0 auto; }
.tools { height: 36px; display: flex; align-items: flex-start; }
.tools > svg { margin-top: 8px; color: #273139; }
.main-search { width: 240px; padding-left: 9px; gap: 13px; }
.t { margin-left: 18px; }
.c { margin-left: 9px; }
.tools .vbar { margin: 4px 20px 0 19px; }
.export { margin: 4px 0 0 auto; width: 97px; height: 32px; border: 0; border-radius: 3px; background: #0067df; color: #fff; display: flex; align-items: center; padding: 0 0 0 12px; gap: 8px; font: 700 14px/20px "Noto Sans", sans-serif; letter-spacing: -.3px; }
.selected { font-size: 16px; line-height: 22px; padding: 13px 0 11px 10px; }
.grid { position: relative; height: 681px; }
.row { display: grid; grid-template-columns: 55px 277px 169px 164px 164px 166px 164px 163px 162px 1fr; align-items: center; height: 32px; border-bottom: 1px solid #cfd8dd; }
.row > :nth-child(2) { align-self: stretch; border-right: 1px solid #cfd8dd; display: flex; align-items: center; }
.row > :nth-child(3) { padding-left: 5px; }
.head { grid-template-columns: 55px 277px 169px 164px 164px 163.5px 163.5px 164px 163.5px 1fr 52px; height: 40px; background: #f3f4f6; font-weight: 500; color: #273139; margin-bottom: 1px; }
.head span { display: flex; align-items: center; gap: 3px; }
.refresh { justify-self: center; }
.row:last-child { border-bottom: 0; }
.check { display: block; width: 16px; height: 16px; margin-left: 17px; border: 2px solid #526069; border-radius: 2px; background: #fff; }
.edgeshade { position: absolute; right: 0; top: 41px; bottom: 0; width: 20px; background: linear-gradient(90deg, rgba(200,203,206,0), rgba(200,203,206,.6)); }
.hscroll { height: 8px; border-radius: 4px; background: #f4f4f4; }
.hscroll i { display: block; height: 8px; width: 1364px; border-radius: 4px; background: #c1c1c1; }
.content > .tools, .content > .crumbs, .grid, .hscroll, .pager { width: 1660px; }
.pager { height: 32px; display: grid; grid-template-columns: 693px 837px 130px; align-items: center; color: #526069; }
.range { padding-left: 16px; }
.nav { display: flex; align-items: center; }
.nav svg { width: 15px; height: 15px; color: #273139; margin-right: 13px; }
.nav .off { color: #8f9ba3; }
.nav span { width: 154px; padding-left: 31px; }
.items { display: flex; align-items: center; padding-top: 2px; }
.items b { font-weight: 400; font-size: 12px; margin-left: 21px; }
.items svg { margin-left: 13px; width: 18px; height: 18px; }

/* taskbar */
.taskbar { display: grid; grid-template-columns: 36px 258px 39px 36px 110px 110px 102px 42px 35px 111px 107px 110px 39px 111px 107px 115px 118px 48px 14px 27px 22px 26px 24px 22px 37px 60px 42px 12px; background: #1b1b1b; color: #fff; font-size: 11.5px; align-items: center; }
.ic { display: grid; place-items: center; }
.ic.pr { padding-right: 5px; }
.taskbar > .ic:nth-child(4) { padding-right: 8px; }
.wsearch { align-self: stretch; background: #f1f1f1; border: 1px solid #b5b5b5; color: #333; font-size: 13.6px; display: flex; align-items: center; padding-left: 11px; gap: 12px; }
.wsearch svg { color: #222; }
.task { align-self: stretch; width: 102px; border-bottom: 2px solid #76b9ed; display: flex; align-items: center; gap: 4px; padding: 2px 0 0 3px; }
.task.slim { padding-left: 4px; gap: 3px; }
.task.wide { width: 110px; padding-left: 7px; }
.focus { background: #4a4a4a; }
.alert { background: #b06020; border-color: #ff7800; }
.desk { color: #ccc; }
.more2 { font-size: 17px; line-height: 12px; margin-top: -14px; }
.peek { border-left: 1px solid #555; align-self: stretch; margin-left: 7px; }

/* right screen */
.edge { display: grid; grid-template-rows: 32px 38px 34px 972px 4px; background: #f7f7f7; color: #1b1b1b; }
.etabs { display: grid; grid-template-columns: 42px 39px 46px 8px 231px 8px 235px 240px 36px 1fr; align-items: center; justify-items: center; background: #cdcdcd; }
.face { width: 20px; height: 24px; border-radius: 10px; overflow: hidden; }
.face svg { width: 20px; height: 24px; }
.etab { justify-self: stretch; align-self: stretch; display: flex; align-items: center; padding-left: 7px; gap: 10px; }
.etab span { flex: 1; overflow: hidden; }
.t1 { padding-right: 2px; }
.t2 { padding-right: 6px; }
.ink { color: #24292f; }
.etab.on { background: #f7f7f7; border-radius: 8px 8px 0 0; padding: 0 7px 0 11px; }
.enew { width: 28px; height: 28px; border-radius: 7px; background: #bfbfbf; display: grid; place-items: center; margin-left: 8px; }
.etabs .winbtns { justify-self: end; }
.etoolbar { display: grid; grid-template-columns: 40px 48px 1fr 46px 42px 7px 40px 50px 38px 50px 37px 46px; padding-left: 8px; align-items: center; justify-items: center; }
.etoolbar .dim { color: #c2c2c2; }
.ebox { justify-self: stretch; height: 32px; margin: 0 4px; border: 2px solid #8fb2ea; border-radius: 16px; background: #fff; display: flex; align-items: center; padding: 0 16px; color: #555; }
.caret { width: 1px; height: 19px; background: #000; margin-left: 15px; }
.st { margin-left: auto; }
.emarks { display: grid; grid-template-columns: 105px 150px 92px 150px 112.5px 87.5px 150px 150.4px 149.4px 154.2px 138px 141px 1fr 52px; padding-left: 14px; align-items: center; padding-bottom: 2px; }
.emarks .mark { gap: 8px; }
.over { justify-self: center; }
.blank { margin: 0 4px; background: #fff; border-radius: 8px; box-shadow: 0 0 2px rgba(0,0,0,.35); }
```
FILE: rows.js
```js
const P17 = "17/05/2024, 00:00:...";
const P21 = "21/05/2024, 06:49:...";
const A = "051024142838LOC";
const B = "051024142839LOC";
const SB = "sagar.bendre@won...";
const TR = "training-1@wonder...";
const DM = "demo@wonderbot...";
const data = [
  [A, "New", P17, "", "", ""],
  [A, "Failed", P17, "3 minutes ago", "3 minutes ago", SB],
  [A, "Failed", P17, "10 minutes ago", "10 minutes ago", SB],
  [A, "Successful", P17, "45 minutes ago", "40 minutes ago", TR],
  [B, "In Progress", P21, "50 minutes ago", "", TR],
  [A, "Successful", P17, "1 hour ago", "1 hour ago", DM],
  [B, "Successful", P21, "1 hour ago", "1 hour ago", DM],
  [A, "Successful", P17, "1 hour ago", "1 hour ago", DM],
  [B, "Successful", P21, "1 hour ago", "1 hour ago", DM],
  [B, "Successful", P21, "1 hour ago", "1 hour ago", DM],
  [B, "Abandoned", P21, "1 hour ago", "23 minutes ago", DM],
  [B, "Successful", P21, "2 hours ago", "2 hours ago", DM],
  [A, "Abandoned", P17, "3 hours ago", "1 hour ago", DM],
  [B, "Failed", P21, "3 hours ago", "3 hours ago", DM],
  [A, "Failed", P17, "3 hours ago", "3 hours ago", DM],
  [A, "Failed", P17, "3 hours ago", "3 hours ago", DM],
  [B, "Abandoned", P21, "3 hours ago", "2 hours ago", DM],
  [B, "Abandoned", P21, "4 hours ago", "2 hours ago", DM],
  [B, "Abandoned", P21, "4 hours ago", "3 hours ago", DM],
  [B, "Failed", P21, "1 day ago", "1 day ago", "vishakha.kolhe@w..."],
];
document.getElementById("rows").innerHTML = data.map(([ref, status, post, start, end, robot]) =>
  `<div class="row"><i class="check"></i>` +
  [ref, status, "None", "Normal", "", post, start, end, robot].map(t => `<span>${t}</span>`).join("") +
  `</div>`).join("");
```
